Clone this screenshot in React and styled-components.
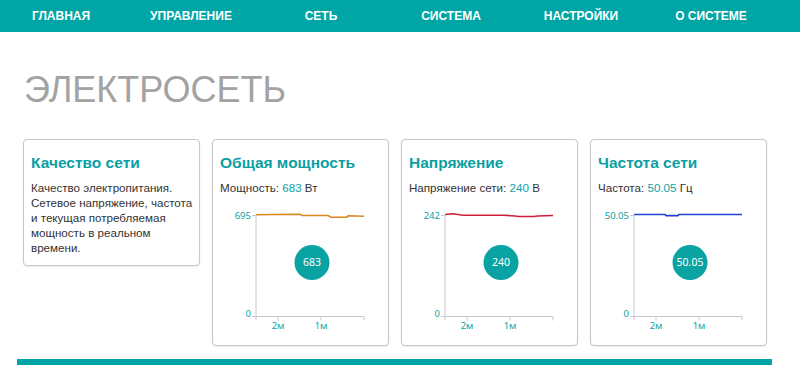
import React from 'react'
import styled, { createGlobalStyle } from 'styled-components'

const GlobalStyle = createGlobalStyle`
  body {
    margin: 0;
    background: #fff;
    font-family: "Liberation Sans", Arial, sans-serif;
  }
`;

const NavBar = styled.nav`
  height: 32px;
  background: #00a6a6;
  display: flex;
  align-items: center;
`;

const NavList = styled.div`
  display: grid;
  grid-template-columns: repeat(6, 130px);
  margin-left: -4px;
`;

const NavItem = styled.a`
  color: #fff;
  font-weight: bold;
  font-size: 12px;
  text-align: center;
  text-decoration: none;
  cursor: pointer;
`;

const Main = styled.main`
  width: 755px;
  margin: 0 17px;
  box-sizing: border-box;
`;

const Heading = styled.h1`
  margin: 39.5px 0 0;
  padding-left: 7px;
  font-size: 36px;
  line-height: 36px;
  font-weight: normal;
  color: #a3a3a3;
`;

const CardRow = styled.div`
  display: grid;
  grid-template-columns: repeat(4, 177px);
  gap: 12px;
  align-items: start;
  margin-top: 31.5px;
  padding-left: 6px;
`;

const Card = styled.section`
  border: 1px solid #c6c6c6;
  border-radius: 4px;
  box-shadow: 0 1px 2px rgba(0, 0, 0, 0.08);
  padding: 14px 3px 10px 7px;
  background: #fff;
`;

const CardTitle = styled.h2`
  margin: 0;
  font-size: 15.5px;
  line-height: 18px;
  font-weight: bold;
  color: #0a9fa4;
`;

const Text = styled.p`
  margin: 7.5px 0 0;
  font-size: 11.6px;
  line-height: 15px;
  color: #333;
`;

const Value = styled.span`
  color: #0aa3a8;
`;

const ChartBox = styled.svg`
  display: block;
  width: 162px;
  height: 140px;
  overflow: visible;
`;

const X0 = 36
const X1 = 144
const TOP = 20.5
const BOTTOM = 121.5

const Chart = ({ color, max, points, value }) => {
  const line = points.map(([x, y], i) => `${i ? 'L' : 'M'}${x + 1} ${y}`).join(' ')
  return (
    <ChartBox viewBox="0 0 162 140">
      <g stroke="#c8c8c8" strokeWidth="1" fill="none">
        <path d={`M${X0 - 4} ${TOP}H${X0}V${BOTTOM}H${X0 - 4}`} />
        <path d={`M${X0} ${BOTTOM + 4}V${BOTTOM}H${X1}V${BOTTOM + 4}`} />
        <path d={`M58 ${BOTTOM}v4M101 ${BOTTOM}v4`} />
      </g>
      <g fill="#0aa3a8" fontFamily="'Noto Sans', sans-serif" fontSize="9.5">
        <text x="31" y={TOP + 1} textAnchor="end" dominantBaseline="middle">{max}</text>
        <text x="31" y={BOTTOM - 2} textAnchor="end" dominantBaseline="middle">0</text>
        <text x="58" y="134" textAnchor="middle">2м</text>
        <text x="101" y="134" textAnchor="middle">1м</text>
      </g>
      <path d={line} stroke={color} strokeWidth="1.6" fill="none" />
      <circle cx="92" cy="67.5" r="17.5" fill="#0aa3a3" />
      <text x="92" y="68" fill="#fff" fontFamily="'Noto Sans', sans-serif" fontSize="10.5"
        textAnchor="middle" dominantBaseline="middle">{value}</text>
    </ChartBox>
  )
}

const navItems = ['ГЛАВНАЯ', 'УПРАВЛЕНИЕ', 'СЕТЬ', 'СИСТЕМА', 'НАСТРОЙКИ', 'О СИСТЕМЕ']

const cards = [
  {
    title: 'Общая мощность', label: 'Мощность', value: '683', unit: 'Вт', max: '695', color: '#d9881c',
    points: [[35, 19.8], [52, 19.5], [79, 19.2], [81, 20.5], [107, 20.5], [110, 22.2], [126, 22.2], [127, 20.8], [143, 21.2]],
  },
  {
    title: 'Напряжение', label: 'Напряжение сети', value: '240', unit: 'В', max: '242', color: '#cc1f3a',
    points: [[35, 19.5], [43, 18.8], [53, 20.2], [94, 20.2], [105, 21], [109, 21.5], [124, 21.5], [128, 21], [143, 20.5]],
  },
  {
    title: 'Частота сети', label: 'Частота', value: '50.05', unit: 'Гц', max: '50.05', color: '#2043d6',
    points: [[35, 19.5], [66, 19.5], [67, 20.6], [79, 20.6], [80, 19.5], [143, 19.5]],
  },
]

const Footer = styled.div`
  height: 10px;
  margin-top: 13.5px;
  background: #00a6a6;
`;

const App = () => (
  <>
    <GlobalStyle />
    <NavBar>
      <NavList>
        {navItems.map(item => <NavItem key={item}>{item}</NavItem>)}
      </NavList>
    </NavBar>
    <Main>
      <Heading>ЭЛЕКТРОСЕТЬ</Heading>
      <CardRow>
        <Card>
          <CardTitle>Качество сети</CardTitle>
          <Text>Качество электропитания. Сетевое напряжение, частота и текущая потребляемая мощность в реальном времени.</Text>
        </Card>
        {cards.map(c => (
          <Card key={c.title}>
            <CardTitle>{c.title}</CardTitle>
            <Text>{c.label}: <Value>{c.value}</Value> {c.unit}</Text>
            <Chart color={c.color} max={c.max} points={c.points} value={c.value} />
          </Card>
        ))}
      </CardRow>
      <Footer />
    </Main>
  </>
)

export default App
